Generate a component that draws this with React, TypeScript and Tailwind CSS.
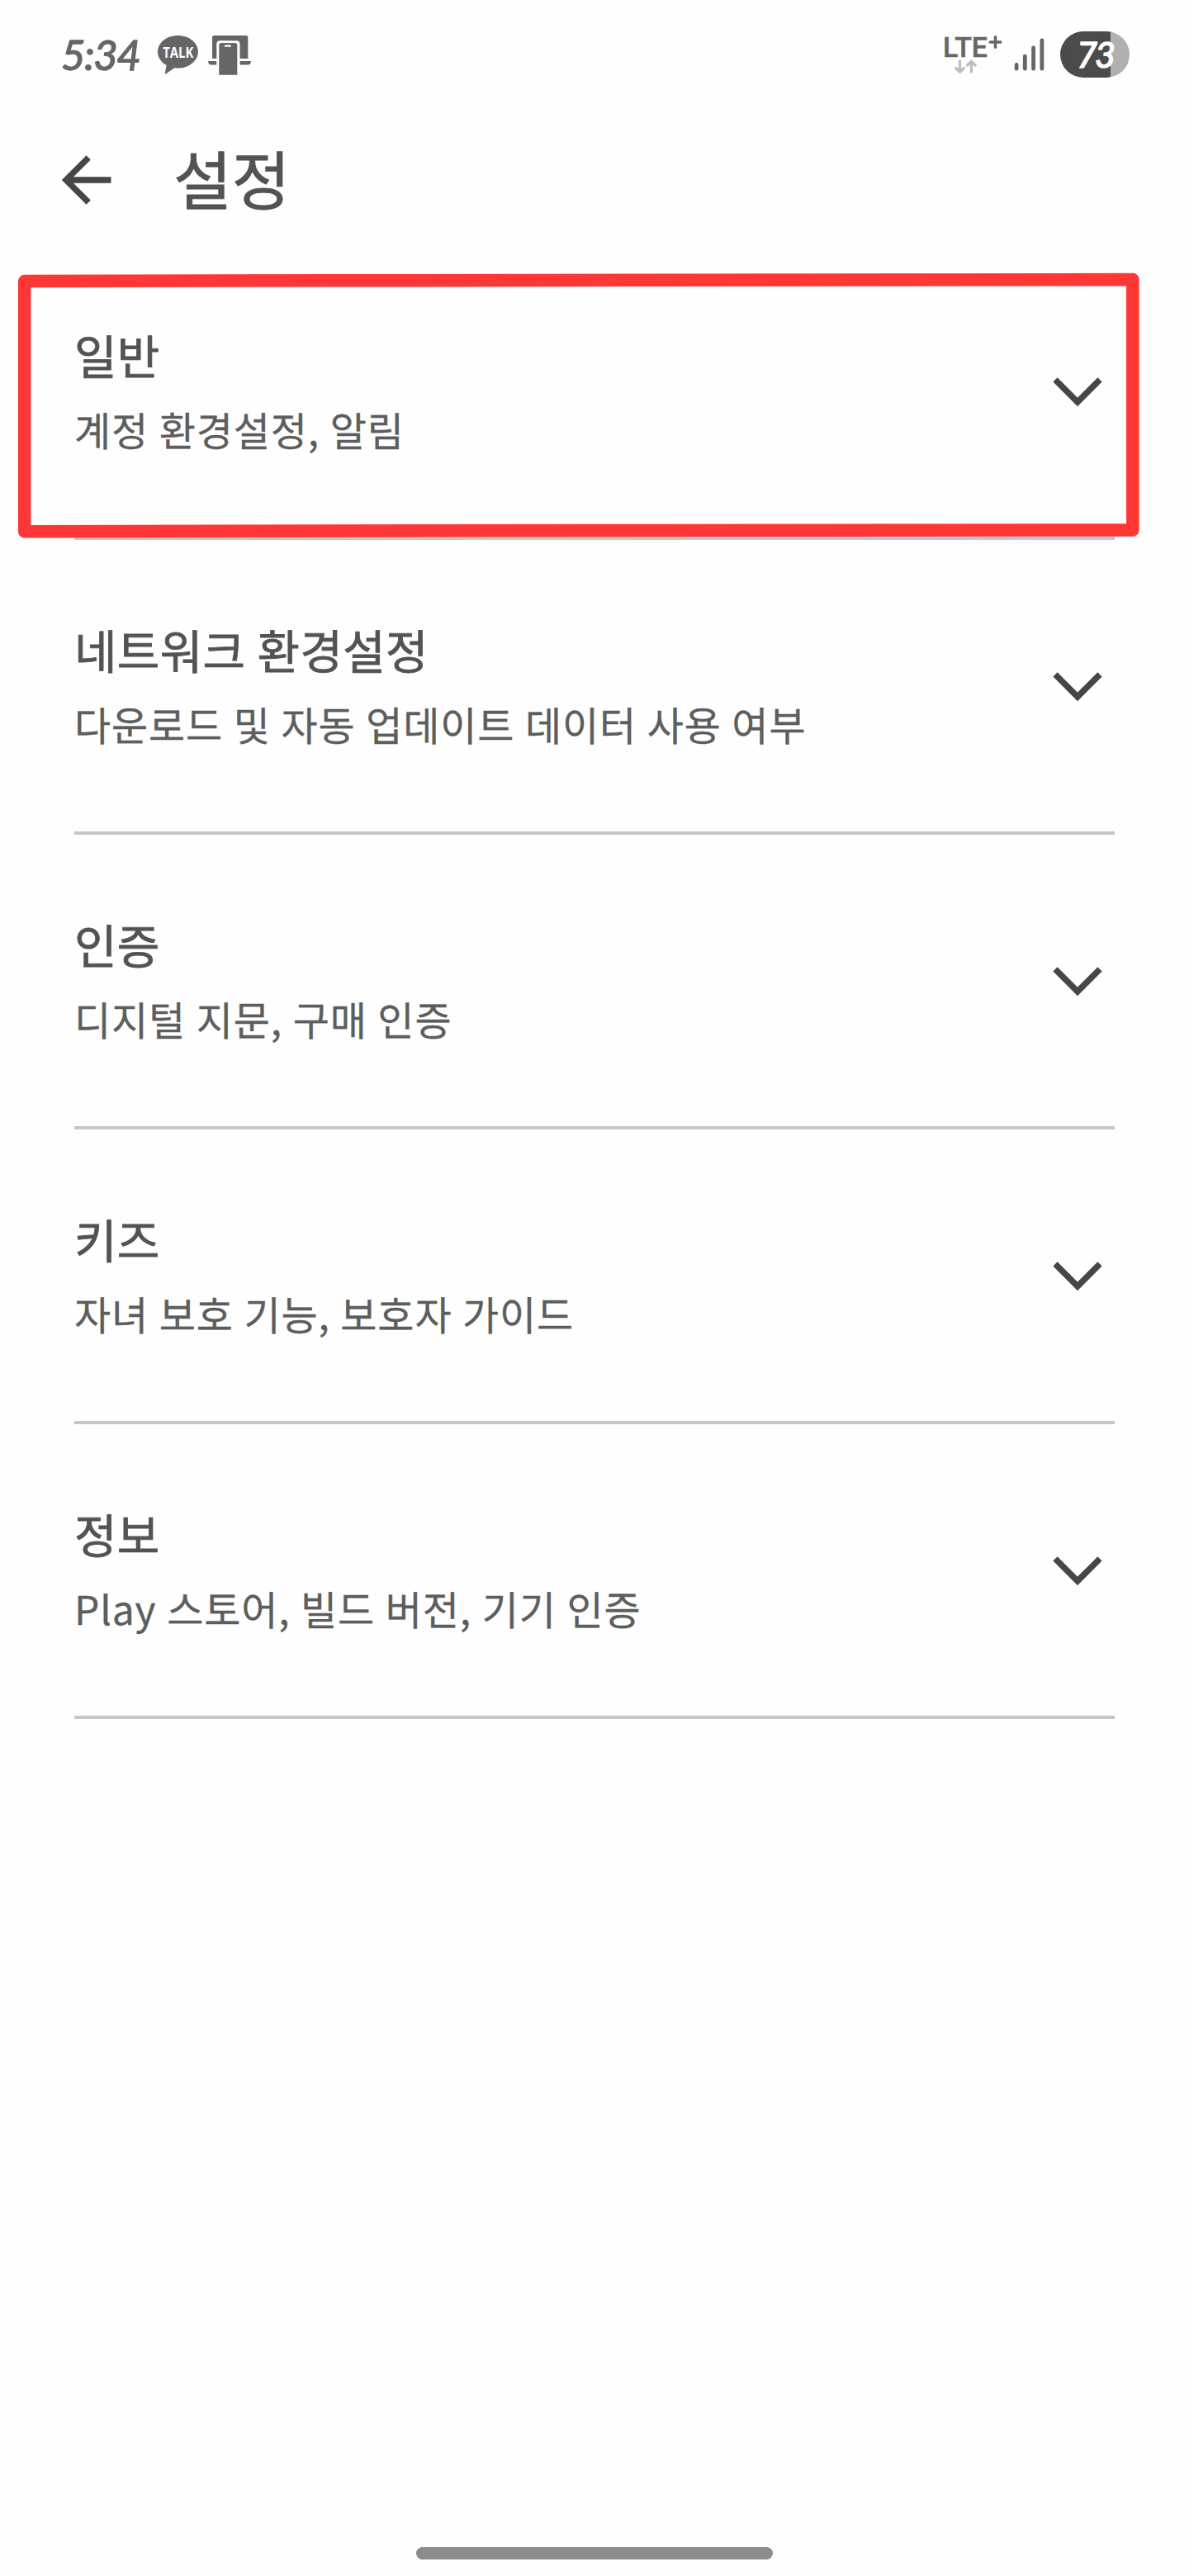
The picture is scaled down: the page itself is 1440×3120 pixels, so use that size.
const sections = [
  { title: "일반", detail: "계정 환경설정, 알림" },
  { title: "네트워크 환경설정", detail: "다운로드 및 자동 업데이트 데이터 사용 여부" },
  { title: "인증", detail: "디지털 지문, 구매 인증" },
  { title: "키즈", detail: "자녀 보호 기능, 보호자 가이드" },
  { title: "정보", detail: "Play 스토어, 빌드 버전, 기기 인증" },
];

function TalkIcon() {
  return (
    <svg className="ml-[20px] h-[50px] w-[52px] shrink-0" viewBox="189 41 52 50">
      <path
        d="M215.4 43C201.900 43 191 51.700 191 62.700C191 69.500 195.200 75.400 201.600 79L199.800 88.500Q199.800 90 201.200 89.300L211.300 82.200Q213.300 82.500 215.400 82.500C229 82.500 239.900 73.700 239.900 62.700S229 43 215.400 43Z"
        fill="#666"
      />
      <text
        x="197.300"
        y="70"
        textLength="37"
        lengthAdjust="spacingAndGlyphs"
        fill="#fefefe"
        fontFamily="'Open Sans', sans-serif"
        fontSize="17.500"
        fontWeight="700"
      >
        TALK
      </text>
    </svg>
  );
}

function DeviceIcon() {
  return (
    <svg className="ml-[10px] h-[52px] w-[56px] shrink-0" viewBox="251 41 56 52" fill="#666">
      <path d="M257 72V46.500Q257 44 259.500 44H297.800Q300.300 44 300.300 46.500V72H290.500V54.500Q290.500 50.300 286.300 50.300H266.500Q262.300 50.300 262.300 54.500V72Z" />
      <path d="M252 75H262.200V79.400H255Q252.500 79.400 252 75ZM290.600 75H304Q303.500 79.400 301 79.400H290.600Z" />
      <path
        fillRule="evenodd"
        d="M268 53H284.500Q287.300 53 287.300 55.800V91.700H265.300V55.800Q265.300 53 268 53ZM272.800 55.600Q271.800 55.600 271.800 56.700T272.800 57.800H279Q280 57.800 280 56.700T279 55.600Z"
      />
    </svg>
  );
}

function LteIcon() {
  return (
    <svg className="h-[54px] w-[80px] shrink-0" viewBox="1136 38 80 54">
      <text
        x="1142"
        y="67.500"
        textLength="54"
        lengthAdjust="spacingAndGlyphs"
        fill="#666"
        stroke="#666"
        strokeWidth="0.500"
        fontFamily="Roboto, sans-serif"
        fontSize="33"
        fontWeight="500"
      >
        LTE
      </text>
      <path d="M1205.500 43.800V56.200M1199.300 50H1211.700" stroke="#666" strokeWidth="3.600" strokeLinecap="round" />
      <path
        d="M1162.500 73V85.500M1157.700 81.500L1162.500 86.300L1167.300 81.500M1176.400 86V74M1171.600 78L1176.400 73.200L1181.200 78"
        fill="none"
        stroke="#bdbdbd"
        strokeWidth="3.200"
        strokeLinecap="round"
        strokeLinejoin="round"
      />
    </svg>
  );
}

function SignalIcon() {
  return (
    <svg className="ml-[12px] h-[44px] w-[38px] shrink-0" viewBox="1228 44 38 44">
      <path
        d="M1231.100 78.500V83.200M1241.300 68.200V83.200M1251.600 57.800V83.200M1261.900 49V83.200"
        stroke="#666"
        strokeWidth="4.800"
        strokeLinecap="round"
      />
    </svg>
  );
}

function BackArrow() {
  return (
    <svg className="h-[60px] w-[60px] shrink-0" viewBox="0 0 60 60" fill="none">
      <path d="M59.500 30H6M32.200 2.800L5 30L32.200 57.200" stroke="#444746" strokeWidth="7.400" />
    </svg>
  );
}

function Chevron() {
  return (
    <svg className="mt-[160px] mr-[15px] h-[36px] w-[60px] shrink-0" viewBox="0 0 60 36" fill="none">
      <path d="M3 2.900L30 29.900L57 2.900" stroke="#444746" strokeWidth="7.400" />
    </svg>
  );
}

function Highlight() {
  return (
    <svg
      className="pointer-events-none absolute top-[27px] left-[14px] h-[336px] w-[1376px] blur-[0.7px]"
      viewBox="14 324 1376 336"
      fill="none"
    >
      <path
        d="M29.700 340.600L400 339.800L1371.800 338.500V642L700 642.500L29.700 643.700Z"
        stroke="#ff3636"
        strokeWidth="15.500"
        strokeLinejoin="round"
      />
    </svg>
  );
}

export default function App() {
  return (
    <main className="flex h-[3120px] w-[1440px] flex-col overflow-hidden bg-[#fefefe] font-['Noto_Sans_CJK_KR','Noto_Sans_CJK_SC',sans-serif]">
      <div className="flex h-[132px] shrink-0 items-center justify-between pr-[72px] pl-[74px]">
        <div className="flex items-center text-[#666]">
          <span className="w-[95px] font-['Lato',sans-serif] text-[51px] leading-[60px] font-normal tracking-[-1.500px] whitespace-nowrap italic [-webkit-text-stroke:1.3px_#666]">
            5:34
          </span>
          <TalkIcon />
          <DeviceIcon />
        </div>
        <div className="flex items-center">
          <LteIcon />
          <SignalIcon />
          <div className="ml-[18px] flex h-[56px] w-[84px] items-center justify-center rounded-full bg-linear-to-r from-[#4b4b4b] from-[73%] to-[#b0b0b0] to-[73%]">
            <span className="font-['Lato',sans-serif] text-[43px] leading-[56px] font-normal tracking-[-3px] text-white italic [-webkit-text-stroke:1.5px_white]">
              73
            </span>
          </div>
        </div>
      </div>

      <header className="flex h-[165px] shrink-0 items-start pl-[75px]">
        <button type="button" aria-label="뒤로" className="mt-[56px]">
          <BackArrow />
        </button>
        <h1 className="mt-[33px] ml-[75px] text-[77px] leading-[100px] font-normal text-[#535353] [-webkit-text-stroke:0.9px_#535353]">
          설정
        </h1>
      </header>

      <section className="relative flex flex-col px-[90px]">
        {sections.map((s) => (
          <div key={s.title} className="flex h-[357px] items-start justify-between border-b-4 border-[#c4c7c6]">
            <div className="flex flex-col gap-[16px] pt-[92px] whitespace-nowrap">
              <h2 className="text-[56px] leading-[80px] font-normal tracking-[0.3px] text-[#535353] [word-spacing:1.5px] [-webkit-text-stroke:0.8px_#535353]">
                {s.title}
              </h2>
              <p className="text-[48px] leading-[68px] tracking-[0.85px] text-[#5c5e5d] [word-spacing:1.1px] [-webkit-text-stroke:0.3px_#5c5e5d]">
                {s.detail}
              </p>
            </div>
            <Chevron />
          </div>
        ))}
        <Highlight />
      </section>

      <div className="mx-auto mt-auto mb-[20px] h-[15px] w-[432px] rounded-full bg-[#8c8c8c]" />
    </main>
  );
}
